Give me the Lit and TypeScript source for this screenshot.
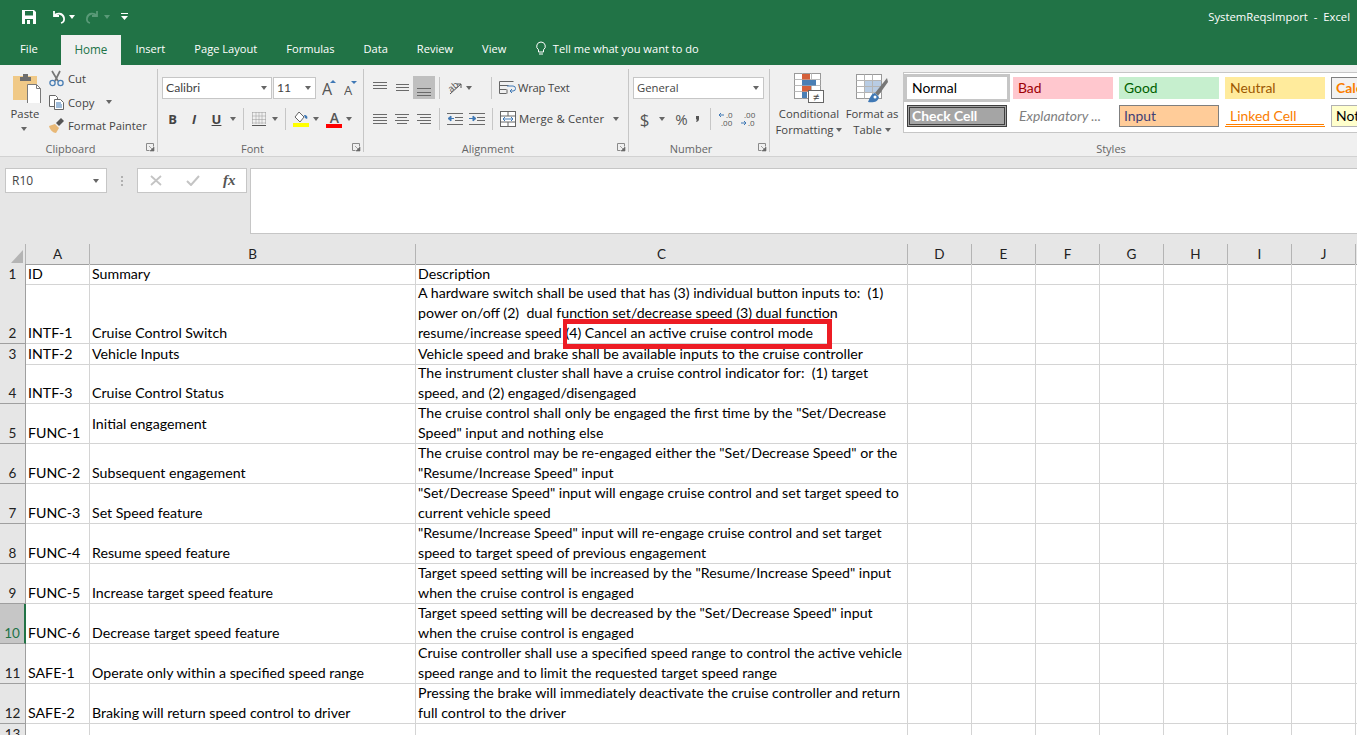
import { LitElement, css, html, svg } from 'lit'
import { customElement } from 'lit/decorators.js'

type Row = { n: number; id: string; sum: string; desc: string; h: number; mid?: boolean }

const rows: Row[] = [
  { n: 1, id: 'ID', sum: 'Summary', desc: 'Description', h: 20 },
  {
    n: 2,
    id: 'INTF-1',
    sum: 'Cruise Control Switch',
    desc: 'A hardware switch shall be used that has (3) individual button inputs to:  (1)\npower on/off (2)  dual function set/decrease speed (3) dual function\nresume/increase speed (4) Cancel an active cruise control mode',
    h: 60,
  },
  { n: 3, id: 'INTF-2', sum: 'Vehicle Inputs', desc: 'Vehicle speed and brake shall be available inputs to the cruise controller', h: 20 },
  {
    n: 4,
    id: 'INTF-3',
    sum: 'Cruise Control Status',
    desc: 'The instrument cluster shall have a cruise control indicator for:  (1) target\nspeed, and (2) engaged/disengaged',
    h: 40,
  },
  {
    n: 5,
    id: 'FUNC-1',
    sum: 'Initial engagement',
    desc: 'The cruise control shall only be engaged the first time by the "Set/Decrease\nSpeed" input and nothing else',
    h: 40,
    mid: true,
  },
  {
    n: 6,
    id: 'FUNC-2',
    sum: 'Subsequent engagement',
    desc: 'The cruise control may be re-engaged either the "Set/Decrease Speed" or the\n"Resume/Increase Speed" input',
    h: 40,
  },
  {
    n: 7,
    id: 'FUNC-3',
    sum: 'Set Speed feature',
    desc: '"Set/Decrease Speed" input will engage cruise control and set target speed to\ncurrent vehicle speed',
    h: 40,
  },
  {
    n: 8,
    id: 'FUNC-4',
    sum: 'Resume speed feature',
    desc: '"Resume/Increase Speed" input will re-engage cruise control and set target\nspeed to target speed of previous engagement',
    h: 40,
  },
  {
    n: 9,
    id: 'FUNC-5',
    sum: 'Increase target speed feature',
    desc: 'Target speed setting will be increased by the "Resume/Increase Speed" input\nwhen the cruise control is engaged',
    h: 40,
  },
  {
    n: 10,
    id: 'FUNC-6',
    sum: 'Decrease target speed feature',
    desc: 'Target speed setting will be decreased by the "Set/Decrease Speed" input\nwhen the cruise control is engaged',
    h: 40,
  },
  {
    n: 11,
    id: 'SAFE-1',
    sum: 'Operate only within a specified speed range',
    desc: 'Cruise controller shall use a specified speed range to control the active vehicle\nspeed range and to limit the requested target speed range',
    h: 40,
  },
  {
    n: 12,
    id: 'SAFE-2',
    sum: 'Braking will return speed control to driver',
    desc: 'Pressing the brake will immediately deactivate the cruise controller and return\nfull control to the driver',
    h: 40,
  },
  { n: 13, id: '', sum: '', desc: '', h: 20 },
]

const tabs = ['Insert', 'Page Layout', 'Formulas', 'Data', 'Review', 'View']
const cols = ['D', 'E', 'F', 'G', 'H', 'I', 'J', 'K']

const hl = (x1: number, x2: number, y: number, c = '#6a6a6a') =>
  svg`<line x1=${x1} x2=${x2} y1=${y + 0.5} y2=${y + 0.5} stroke=${c} />`

const icon = (w: number, h: number, body: unknown) =>
  html`<svg class="ic" width=${w} height=${h} viewBox="0 0 ${w} ${h}">${body}</svg>`

const launcher = icon(
  9,
  9,
  svg`<path d="M.5.5h7v3M.5.5v7h3" fill="none" stroke="#8a8a8a"/><path d="M3 3l4 4M8 4v4H4z" fill="#6a6a6a" stroke="#6a6a6a" stroke-width=".6"/>`,
)

const ysLines = (x1: number, x2: number, ys: number[]) => ys.map((y) => hl(x1, x2, y))

@customElement('app-root')
export class AppRoot extends LitElement {
  static styles = css`
    :host {
      display: block;
      width: 1357px;
      height: 735px;
      overflow: hidden;
      position: relative;
      background: #fff;
      font-family: 'Open Sans', 'Noto Sans', sans-serif;
      font-size: 11.3px;
      color: #444;
    }
    svg.ic {
      display: block;
      flex: none;
    }
    .ml-1 { margin-left: 1px; }
    .ml-2 { margin-left: 2px; }
    .ml-3 { margin-left: 3px; }
    .ml-4 { margin-left: 4px; }
    .ml-5 { margin-left: 5px; }
    .ml-6 { margin-left: 6px; }
    .ml-7 { margin-left: 7px; }
    .ml-8 { margin-left: 8px; }
    .ml-9 { margin-left: 9px; }
    .ml-10 { margin-left: 10px; }
    .ml-11 { margin-left: 11px; }
    .ml-13 { margin-left: 13px; }
    .ml-19 { margin-left: 19px; }
    .titlebar {
      height: 35px;
      background: #217346;
      display: flex;
      align-items: center;
      padding: 0 7px 2px 21px;
      box-sizing: border-box;
      color: #fff;
    }
    .titlebar .name {
      margin-left: auto;
      padding-bottom: 1px;
      white-space: pre;
    }
    .qat {
      display: flex;
      align-items: center;
    }
    .dd.white {
      border-top-color: #fff;
    }
    .dd.dim {
      border-top-color: #5a9a78;
    }
    .tabs {
      height: 30px;
      background: #217346;
      display: flex;
      align-items: flex-end;
      padding-left: 5px;
      color: #fff;
      font-size: 11.1px;
    }
    .tab {
      height: 30px;
      padding: 0 14.5px 3px;
      display: flex;
      align-items: center;
      box-sizing: border-box;
    }
    .tab.file {
      padding: 0 23px 3px 15px;
      font-size: 11.3px;
    }
    .tab.home {
      width: 60px;
      padding: 0 0 3px;
      justify-content: center;
      background: #f0f0f0;
      color: #217346;
      font-size: 11.7px;
    }
    .tab.tell {
      gap: 6px;
      margin-left: 14px;
      padding: 0 0 3px;
    }
    .ribbon {
      height: 92px;
      background: #f0f0f0;
      border-bottom: 1px solid #d2d2d2;
      box-sizing: border-box;
      display: flex;
      overflow: hidden;
    }
    .group {
      flex: none;
      box-sizing: border-box;
      display: flex;
      flex-direction: column;
      position: relative;
      padding-top: 4px;
    }
    .group::after {
      content: '';
      position: absolute;
      right: 0;
      top: 4px;
      bottom: 4px;
      width: 1px;
      background: #c6c6c6;
    }
    .gbody {
      height: 73px;
      display: flex;
    }
    .glabel {
      height: 15px;
      line-height: 15px;
      text-align: center;
      color: #666;
      font-size: 11px;
      position: relative;
      padding-right: 17px;
    }
    .glabel.plain {
      padding-right: 0;
    }
    .launch {
      position: absolute;
      right: 3px;
      top: 2px;
    }
    .g-clip { width: 158px; }
    .g-font { width: 206px; }
    .g-align { width: 265px; }
    .g-num { width: 141px; }
    .g-styles { width: 682px; }
    .paste {
      width: 48px;
      padding: 4px 0 0 12px;
      box-sizing: border-box;
    }
    .paste .lbl {
      margin: 3px 0 0 -11px;
      width: 48px;
      text-align: center;
    }
    .dd {
      width: 0;
      height: 0;
      flex: none;
      border-left: 3.5px solid transparent;
      border-right: 3.5px solid transparent;
      border-top: 4px solid #666;
    }
    .paste .dd {
      margin: 6px 0 0 9px;
    }
    .clipcol {
      margin-top: -2px;
    }
    .cliprow {
      height: 23.5px;
      display: flex;
      align-items: center;
      gap: 3px;
    }
    .cliprow .dd {
      margin-left: 9px;
    }
    .tworow {
      display: flex;
      flex-direction: column;
      gap: 9px;
      padding-top: 8px;
    }
    .tworow.tight {
      padding-top: 7px;
      gap: 8px;
    }
    .irow {
      display: flex;
      align-items: center;
      height: 22px;
    }
    .tight .irow {
      height: 23px;
    }
    .select {
      background: #fff;
      border: 1px solid #c6c6c6;
      height: 22px;
      box-sizing: border-box;
      display: flex;
      align-items: center;
      justify-content: space-between;
      padding: 0 4px 1px 3px;
    }
    .sel-font { width: 110px; }
    .sel-size { width: 43px; margin-left: 1px; }
    .sel-num { width: 131px; }
    .calibri {
      font-family: Lato, sans-serif;
      font-size: 12.2px;
    }
    .sep {
      width: 1px;
      height: 22px;
      background: #c6c6c6;
      flex: none;
    }
    .g-font .gbody {
      padding-left: 4px;
    }
    .bt {
      flex: none;
      text-align: center;
      font-size: 13px;
      color: #444;
      font-family: 'Open Sans', sans-serif;
    }
    .bt-b {
      width: 21px;
      font-weight: bold;
    }
    .bt-i {
      width: 22px;
      font-style: italic;
      font-weight: bold;
    }
    .bt-u {
      width: 23px;
      font-weight: bold;
      text-decoration: underline;
    }
    .g-align .gbody {
      padding-left: 5px;
    }
    .al {
      flex: none;
      width: 22px;
      height: 23px;
      display: flex;
      align-items: center;
      justify-content: center;
    }
    .al.on {
      background: #bfbfbf;
    }
    .wrap-t {
      letter-spacing: -0.25px;
    }
    .merge-t {
      letter-spacing: 0.15px;
      width: 85px;
      white-space: nowrap;
    }
    .g-num .gbody {
      padding-left: 4px;
    }
    .nbtn {
      color: #555;
      flex: none;
      text-align: center;
    }
    .dollar {
      width: 13px;
      margin-left: 5px;
      font-size: 17px;
    }
    .pct {
      width: 15px;
      font-size: 15px;
    }
    .bigbtn {
      flex: none;
      display: flex;
      flex-direction: column;
      align-items: center;
      text-align: center;
      line-height: 16px;
      padding-top: 4px;
      box-sizing: border-box;
    }
    .bigbtn.cond {
      width: 72px;
      margin-left: 3px;
    }
    .bigbtn.table {
      width: 54px;
    }
    .bigbtn .t {
      margin-top: 3px;
      white-space: nowrap;
    }
    .ddline {
      display: flex;
      align-items: center;
      gap: 3px;
      justify-content: center;
    }
    .gallery {
      flex: none;
      width: 560px;
      height: 61px;
      margin: 3px 0 0 4px;
      background: #fff;
      border: 1px solid #c6c6c6;
      box-sizing: border-box;
      display: grid;
      grid-template-columns: repeat(5, 100px);
      grid-auto-rows: 22px;
      column-gap: 6px;
      row-gap: 6px;
      padding: 4px 0 0 3px;
      font-family: Lato, sans-serif;
      font-size: 13.9px;
      color: #000;
    }
    .st {
      box-sizing: border-box;
      padding-left: 4px;
      line-height: 20px;
      white-space: nowrap;
      overflow: hidden;
      border: 1px solid transparent;
    }
    .st.normal {
      outline: 3px solid #c6c6c6;
      outline-offset: 0;
      border: 0;
      padding-left: 5px;
      line-height: 22px;
    }
    .st.bad {
      background: #ffc7ce;
      color: #9c0006;
    }
    .st.good {
      background: #c6efce;
      color: #006100;
    }
    .st.neutral {
      background: #ffeb9c;
      color: #9c5700;
    }
    .st.calc {
      background: #f2f2f2;
      color: #fa7d00;
      border-color: #7f7f7f;
      font-weight: bold;
    }
    .st.check {
      background: #a5a5a5;
      color: #fff;
      font-weight: bold;
      border: 3px double #3f3f3f;
      line-height: 16px;
      padding-left: 2px;
    }
    .st.expl {
      color: #7f7f7f;
      font-style: italic;
      padding-left: 5px;
    }
    .st.input {
      background: #ffcc99;
      color: #3f3f76;
      border-color: #7f7f7f;
    }
    .st.linked {
      color: #fa7d00;
      border-bottom: 3px double #ff8001;
      line-height: 19px;
    }
    .st.note {
      background: #ffffcc;
      border-color: #b2b2b2;
    }
    .fbar {
      height: 87px;
      background: #e6e6e6;
      display: flex;
      padding: 11px 0 0 5px;
      box-sizing: border-box;
    }
    .namebox {
      width: 102px;
      height: 25px;
      background: #fff;
      border: 1px solid #c6c6c6;
      box-sizing: border-box;
      display: flex;
      align-items: center;
      justify-content: space-between;
      padding: 0 7px 0 6px;
      font-size: 12px;
    }
    .dots {
      width: 30px;
      display: flex;
      justify-content: center;
      padding-top: 8px;
      box-sizing: border-box;
    }
    .fxbox {
      width: 110px;
      height: 25px;
      background: #fff;
      border: 1px solid #c6c6c6;
      box-sizing: border-box;
      display: flex;
      align-items: center;
      padding-left: 12px;
      gap: 24px;
    }
    .fx {
      font-family: 'Liberation Serif', serif;
      font-style: italic;
      font-weight: bold;
      font-size: 15px;
      color: #555;
      margin-left: -1px;
    }
    .formula {
      flex: 1;
      height: 66px;
      margin-left: 3px;
      background: #fff;
      border: 1px solid #c6c6c6;
      border-right: 0;
      box-sizing: border-box;
    }
    .sheet {
      font-family: Lato, sans-serif;
      font-size: 14.2px;
      color: #000;
      position: relative;
    }
    .row {
      display: grid;
      grid-template-columns: 26px 64px 326px 492px repeat(8, 64px);
    }
    .head {
      height: 20px;
      background: #e6e6e6;
    }
    .hc {
      border-right: 1px solid #b4b4b4;
      border-bottom: 1px solid #9f9f9f;
      text-align: center;
      line-height: 20px;
      box-sizing: border-box;
      font-size: 13.5px;
      color: #222;
    }
    .corner {
      border-right: 1px solid #b4b4b4;
      border-bottom: 1px solid #9f9f9f;
      box-sizing: border-box;
      display: flex;
      align-items: flex-end;
      justify-content: flex-end;
      padding: 0 2px 1px 0;
    }
    .rh {
      background: #e6e6e6;
      border-right: 1px solid #9f9f9f;
      border-bottom: 1px solid #9f9f9f;
      box-sizing: border-box;
      display: flex;
      align-items: flex-end;
      justify-content: center;
      line-height: 20px;
      font-size: 13.5px;
      color: #222;
    }
    .rh.sel {
      background: #c6c6c6;
      color: #217346;
      border-right: 2px solid #217346;
    }
    .cell {
      border-right: 1px solid #d4d4d4;
      border-bottom: 1px solid #d4d4d4;
      box-sizing: border-box;
      padding: 0 2px;
      display: flex;
      align-items: flex-end;
      white-space: pre-wrap;
      line-height: 20px;
      overflow: hidden;
    }
    .cell.mid {
      align-items: center;
    }
    .callout {
      position: absolute;
      left: 563px;
      top: 75px;
      width: 269px;
      height: 30px;
      border: 5px solid #ed1c24;
      border-left-width: 4px;
      box-sizing: border-box;
    }
  `

  private titlebar() {
    return html`<div class="titlebar">
      <div class="qat">
        ${icon(
          16,
          16,
          svg`<path d="M1 1h12l2 2v12H1z" fill="#fff"/><rect x="4" y="2" width="8" height="4.500" fill="#217346"/><rect x="4" y="10" width="8" height="5" fill="#217346"/><rect x="6" y="11" width="3" height="4" fill="#fff"/>`,
        )}
        <span class="ml-13"></span>
        ${icon(
          16,
          16,
          svg`<path d="M4 2v5h5M4.500 6.500C7 3.500 13 4 14 9c.4 2.500-1 4.500-3 5" fill="none" stroke="#fff" stroke-width="1.800"/>`,
        )}
        <span class="dd white ml-3"></span>
        <span class="ml-10"></span>
        ${icon(
          16,
          16,
          svg`<path d="M12 2v5H7M11.500 6.500C9 3.500 3 4 2 9c-.4 2.500 1 4.500 3 5" fill="none" stroke="#5a9a78" stroke-width="1.800"/>`,
        )}
        <span class="dd dim ml-3"></span>
        <span class="ml-11"></span>
        ${icon(7, 8, svg`<rect width="7" height="1" fill="#fff"/><path d="M0 3h7L3.500 7z" fill="#fff"/>`)}
      </div>
      <span class="name">SystemReqsImport  -  Excel</span>
    </div>`
  }

  private tabs() {
    return html`<div class="tabs">
      <div class="tab file">File</div>
      <div class="tab home">Home</div>
      ${tabs.map((t) => html`<div class="tab">${t}</div>`)}
      <div class="tab tell">
        ${icon(
          12,
          15,
          svg`<path d="M6 1a4.300 4.300 0 0 0-2.500 7.800V11h5V8.800A4.300 4.300 0 0 0 6 1z" fill="none" stroke="#fff"/><path d="M4 13h4" stroke="#fff"/>`,
        )}
        Tell me what you want to do
      </div>
    </div>`
  }

  private clipboard() {
    return html`<div class="group g-clip">
      <div class="gbody">
        <div class="paste">
          ${icon(
            30,
            30,
            svg`<rect x="1" y="3" width="24" height="24" fill="#f0c987"/><path d="M8 4h11v4H8zM11 1h5v3h-5z" fill="#6d6d6d"/><path d="M15.500 11.500h9l4 4v15h-13z" fill="#fff" stroke="#7a7a7a"/><path d="M24.500 11.500v4h4" fill="none" stroke="#7a7a7a"/>`,
          )}
          <div class="lbl">Paste</div>
          <div class="dd"></div>
        </div>
        <div class="clipcol">
          <div class="cliprow">
            ${icon(
              17,
              17,
              svg`<path d="M4 1l6 10M12 1L7 11" stroke="#777" stroke-width="1.700" fill="none"/><circle cx="4.500" cy="13" r="2.600" fill="none" stroke="#4a7fb5" stroke-width="1.300"/><circle cx="12.500" cy="13" r="2.600" fill="none" stroke="#4a7fb5" stroke-width="1.300"/>`,
            )}
            Cut
          </div>
          <div class="cliprow">
            ${icon(
              17,
              17,
              svg`<path d="M1.500 1.500h6l2 2v9h-8z" fill="#fff" stroke="#666"/><path d="M6.500 5.500h6l3 3v7h-9z" fill="#fff" stroke="#666"/><path d="M8 9h5M8 11h6M8 13h6" stroke="#3f78b5"/>`,
            )}
            Copy
            <span class="dd"></span>
          </div>
          <div class="cliprow">
            ${icon(
              17,
              17,
              svg`<path d="M1 9l6-2 4 4-3 5c-3 0-6-3-7-7z" fill="#e8b876"/><path d="M8 6l5-5 3 3-5 5z" fill="#555"/>`,
            )}
            Format Painter
          </div>
        </div>
      </div>
      <div class="glabel">Clipboard<span class="launch">${launcher}</span></div>
    </div>`
  }

  private font() {
    return html`<div class="group g-font">
      <div class="gbody">
        <div class="tworow">
          <div class="irow">
            <div class="select calibri sel-font">Calibri<span class="dd"></span></div>
            <div class="select calibri sel-size">11<span class="dd"></span></div>
            <span class="ml-6"></span>
            ${icon(
              16,
              18,
              svg`<text x="0" y="16" font-family="Open Sans" font-size="16" fill="#555">A</text><path d="M8 4l3-3 3 3z" fill="#3f78b5"/>`,
            )}
            <span class="ml-6"></span>
            ${icon(
              14,
              18,
              svg`<text x="0" y="16" font-family="Open Sans" font-size="13" fill="#555">A</text><path d="M7 2l3 3 3-3z" fill="#3f78b5"/>`,
            )}
          </div>
          <div class="irow">
            <span class="bt bt-b">B</span>
            <span class="bt bt-i">I</span>
            <span class="bt bt-u">U</span>
            <span class="dd ml-2"></span>
            <span class="sep ml-7"></span>
            <span class="ml-8"></span>
            ${icon(
              14,
              14,
              svg`<path d="M.5.500h13M.5 4h13M.5 7.500h13M.5 11h13M.5.500v11M4 .5v11M7 .5v11M10 .5v11M13.500.500v11" stroke="#999" stroke-dasharray="1 1" fill="none"/><path d="M0 13.500h14" stroke="#555"/>`,
            )}
            <span class="dd ml-6"></span>
            <span class="sep ml-7"></span>
            <span class="ml-7"></span>
            ${icon(
              16,
              16,
              svg`<path d="M6 1l5 5-4 5-5-5z" fill="#fff" stroke="#666"/><path d="M11 4c3 0 4 2 3 4l-2-1z" fill="#3f78b5"/><rect y="12" width="16" height="4" fill="#ffff00"/>`,
            )}
            <span class="dd ml-4"></span>
            <span class="ml-7"></span>
            ${icon(
              17,
              17,
              svg`<text x="8.500" y="12" text-anchor="middle" font-family="Open Sans" font-weight="600" font-size="14" fill="#555">A</text><rect y="13" width="16" height="4" fill="#ff0000"/>`,
            )}
            <span class="dd ml-3"></span>
          </div>
        </div>
      </div>
      <div class="glabel">Font<span class="launch">${launcher}</span></div>
    </div>`
  }

  private alignment() {
    const left = icon(16, 12, ysLines(1, 15, [1, 4, 7, 10]))
    return html`<div class="group g-align">
      <div class="gbody">
        <div class="tworow tight">
          <div class="irow">
            <span class="al">${icon(16, 16, ysLines(1, 15, [2, 5, 8]))}</span>
            <span class="al">${icon(16, 16, ysLines(2, 15, [4, 7, 10]))}</span>
            <span class="al on">${icon(16, 16, ysLines(1, 15, [8, 12, 15]))}</span>
            <span class="sep ml-4"></span>
            <span class="ml-7"></span>
            ${icon(
              17,
              17,
              svg`<text x="1" y="11" transform="rotate(-40 6 8)" font-family="Open Sans" font-size="9" fill="#555">ab</text><path d="M3 15L14 5M14 5h-4M14 5v4" stroke="#555" fill="none"/>`,
            )}
            <span class="dd ml-2"></span>
            <span class="sep ml-19"></span>
            <span class="ml-7"></span>
            ${icon(
              17,
              16,
              svg`<path d="M.5 1.500h14M.5 5.500h9M.5 9.500h7M.5 13.500h7M.5 1.500v12M8 9.500v4" stroke="#666" fill="none"/><path d="M8 6h6a2 2 0 0 1 0 5h-3M13 9l-2 2 2 2" stroke="#3f78b5" fill="none"/>`,
            )}
            <span class="wrap-t ml-2">Wrap Text</span>
          </div>
          <div class="irow">
            <span class="al">${left}</span>
            <span class="al">
              ${icon(16, 12, [hl(1, 15, 1), hl(3, 13, 4), hl(1, 15, 7), hl(3, 13, 10)])}
            </span>
            <span class="al">
              ${icon(16, 12, [hl(1, 15, 1), hl(4, 15, 4), hl(1, 15, 7), hl(4, 15, 10)])}
            </span>
            <span class="sep ml-4"></span>
            <span class="ml-7"></span>
            ${icon(
              16,
              12,
              svg`${ysLines(0, 16, [0, 11])}${ysLines(8, 16, [4, 7])}<path d="M7 5.500H2M4 3L1 5.500 4 8z" stroke="#3f78b5" fill="#3f78b5"/>`,
            )}
            <span class="ml-6"></span>
            ${icon(
              16,
              12,
              svg`${ysLines(0, 16, [0, 11])}${ysLines(8, 16, [4, 7])}<path d="M0 5.500h5M4 3l3 2.500L4 8z" stroke="#3f78b5" fill="#3f78b5"/>`,
            )}
            <span class="sep ml-7"></span>
            <span class="ml-7"></span>
            ${icon(
              16,
              16,
              svg`<rect x=".5" y=".5" width="15" height="15" fill="#fff" stroke="#666"/><path d="M.5 5h15M.5 11h15M8 .5V5M8 11v4.500" stroke="#666"/><path d="M3 8h10M5 6L3 8l2 2M11 6l2 2-2 2" stroke="#3f78b5" fill="none"/>`,
            )}
            <span class="merge-t ml-3">Merge &amp; Center</span>
            <span class="dd ml-9"></span>
          </div>
        </div>
      </div>
      <div class="glabel">Alignment<span class="launch">${launcher}</span></div>
    </div>`
  }

  private number() {
    return html`<div class="group g-num">
      <div class="gbody">
        <div class="tworow">
          <div class="irow">
            <div class="select sel-num">General<span class="dd"></span></div>
          </div>
          <div class="irow">
            <span class="nbtn dollar">$</span>
            <span class="dd ml-8"></span>
            <span class="nbtn pct ml-9">%</span>
            ${icon(
              12,
              16,
              svg`<path d="M7 5h3v3c0 1.500-1 2.500-2.500 3L7 10c.6-.3 1-.8 1-1.500H7z" fill="#555"/>`,
            )}
            <span class="sep ml-9"></span>
            <span class="ml-7"></span>
            ${icon(
              16,
              16,
              svg`<path d="M6 4H1M3 2L1 4l2 2" stroke="#3f78b5" fill="none"/><text x="8" y="7" font-family="Open Sans" font-size="8" fill="#555">.0</text><text x="3" y="15" font-family="Open Sans" font-size="8" fill="#555">.00</text>`,
            )}
            <span class="ml-6"></span>
            ${icon(
              16,
              16,
              svg`<text x="4" y="7" font-family="Open Sans" font-size="8" fill="#555">.00</text><path d="M1 12h5M4 10l2 2-2 2" stroke="#3f78b5" fill="none"/><text x="8" y="15" font-family="Open Sans" font-size="8" fill="#555">.0</text>`,
            )}
          </div>
        </div>
      </div>
      <div class="glabel">Number<span class="launch">${launcher}</span></div>
    </div>`
  }

  private styleGroup() {
    return html`<div class="group g-styles">
      <div class="gbody">
        <div class="bigbtn cond">
          ${icon(
            30,
            30,
            svg`<rect x=".5" y=".5" width="26" height="25" fill="#fff" stroke="#999"/><path d="M8.500 .5v25M17.500 .5v25M.5 6.500h26M.5 12.500h26M.5 18.500h26" stroke="#bbb"/><rect x="8" y="1" width="8" height="5.500" fill="#d4603a"/><rect x="8" y="7" width="14" height="5.500" fill="#4a7fb5"/><rect x="8" y="13" width="9" height="5.500" fill="#d4603a"/><rect x="8" y="19" width="5" height="6" fill="#4a7fb5"/><rect x="14.500" y="17.500" width="15" height="12" fill="#fff" stroke="#666"/><text x="22" y="27.500" text-anchor="middle" font-family="Liberation Sans" font-size="11" fill="#444">≠</text>`,
          )}
          <div class="t">Conditional</div>
          <div class="ddline">Formatting<span class="dd"></span></div>
        </div>
        <div class="bigbtn table">
          ${icon(
            32,
            30,
            svg`<rect x=".5" y="1.500" width="25" height="24" fill="#fff" stroke="#999"/><rect x="8" y="8" width="17" height="12" fill="#b8cce4"/><path d="M8.500 1.500v24M16.500 1.500v24M.5 7.500h25M.5 13.500h25M.5 19.500h25" stroke="#b5b5b5"/><path d="M31 5L19 20l3 3L32 9z" fill="#777"/><path d="M19 20c-3 0-5 4-7 9 5 1 10 0 11-5z" fill="#3f78b5"/><circle cx="19" cy="24" r="1.500" fill="#fff"/>`,
          )}
          <div class="t">Format as</div>
          <div class="ddline">Table<span class="dd"></span></div>
        </div>
        <div class="gallery">
          <div class="st normal">Normal</div>
          <div class="st bad">Bad</div>
          <div class="st good">Good</div>
          <div class="st neutral">Neutral</div>
          <div class="st calc">Calculation</div>
          <div class="st check">Check Cell</div>
          <div class="st expl">Explanatory ...</div>
          <div class="st input">Input</div>
          <div class="st linked">Linked Cell</div>
          <div class="st note">Note</div>
        </div>
      </div>
      <div class="glabel plain">Styles</div>
    </div>`
  }

  private formulaBar() {
    return html`<div class="fbar">
      <div class="namebox">R10<span class="dd"></span></div>
      <div class="dots">
        ${icon(2, 10, svg`<path d="M0 0h2v2H0zM0 4h2v2H0zM0 8h2v2H0z" fill="#b0b0b0"/>`)}
      </div>
      <div class="fxbox">
        ${icon(12, 11, svg`<path d="M1 1l10 9M11 1L1 10" stroke="#c4c4c4" stroke-width="1.800"/>`)}
        ${icon(14, 11, svg`<path d="M1 6l4 4 8-9" stroke="#c4c4c4" stroke-width="2" fill="none"/>`)}
        <span class="fx">fx</span>
      </div>
      <div class="formula"></div>
    </div>`
  }

  private sheet() {
    return html`<div class="sheet">
      <div class="row head">
        <div class="corner">${icon(12, 13, svg`<path d="M12 0v13H0z" fill="#b4b4b4"/>`)}</div>
        <div class="hc">A</div>
        <div class="hc">B</div>
        <div class="hc">C</div>
        ${cols.map((c) => html`<div class="hc">${c}</div>`)}
      </div>
      ${rows.map(
        (r) => html`<div class="row" style="height:${r.h}px">
          <div class="rh ${r.n === 10 ? 'sel' : ''}">${r.n}</div>
          <div class="cell">${r.id}</div>
          <div class="cell ${r.mid ? 'mid' : ''}">${r.sum}</div>
          <div class="cell">${r.desc}</div>
          ${cols.map(() => html`<div class="cell"></div>`)}
        </div>`,
      )}
      <div class="callout"></div>
    </div>`
  }

  render() {
    return html`
      ${this.titlebar()} ${this.tabs()}
      <div class="ribbon">
        ${this.clipboard()} ${this.font()} ${this.alignment()} ${this.number()} ${this.styleGroup()}
      </div>
      ${this.formulaBar()} ${this.sheet()}
    `
  }
}

declare global {
  interface HTMLElementTagNameMap {
    'app-root': AppRoot
  }
}
